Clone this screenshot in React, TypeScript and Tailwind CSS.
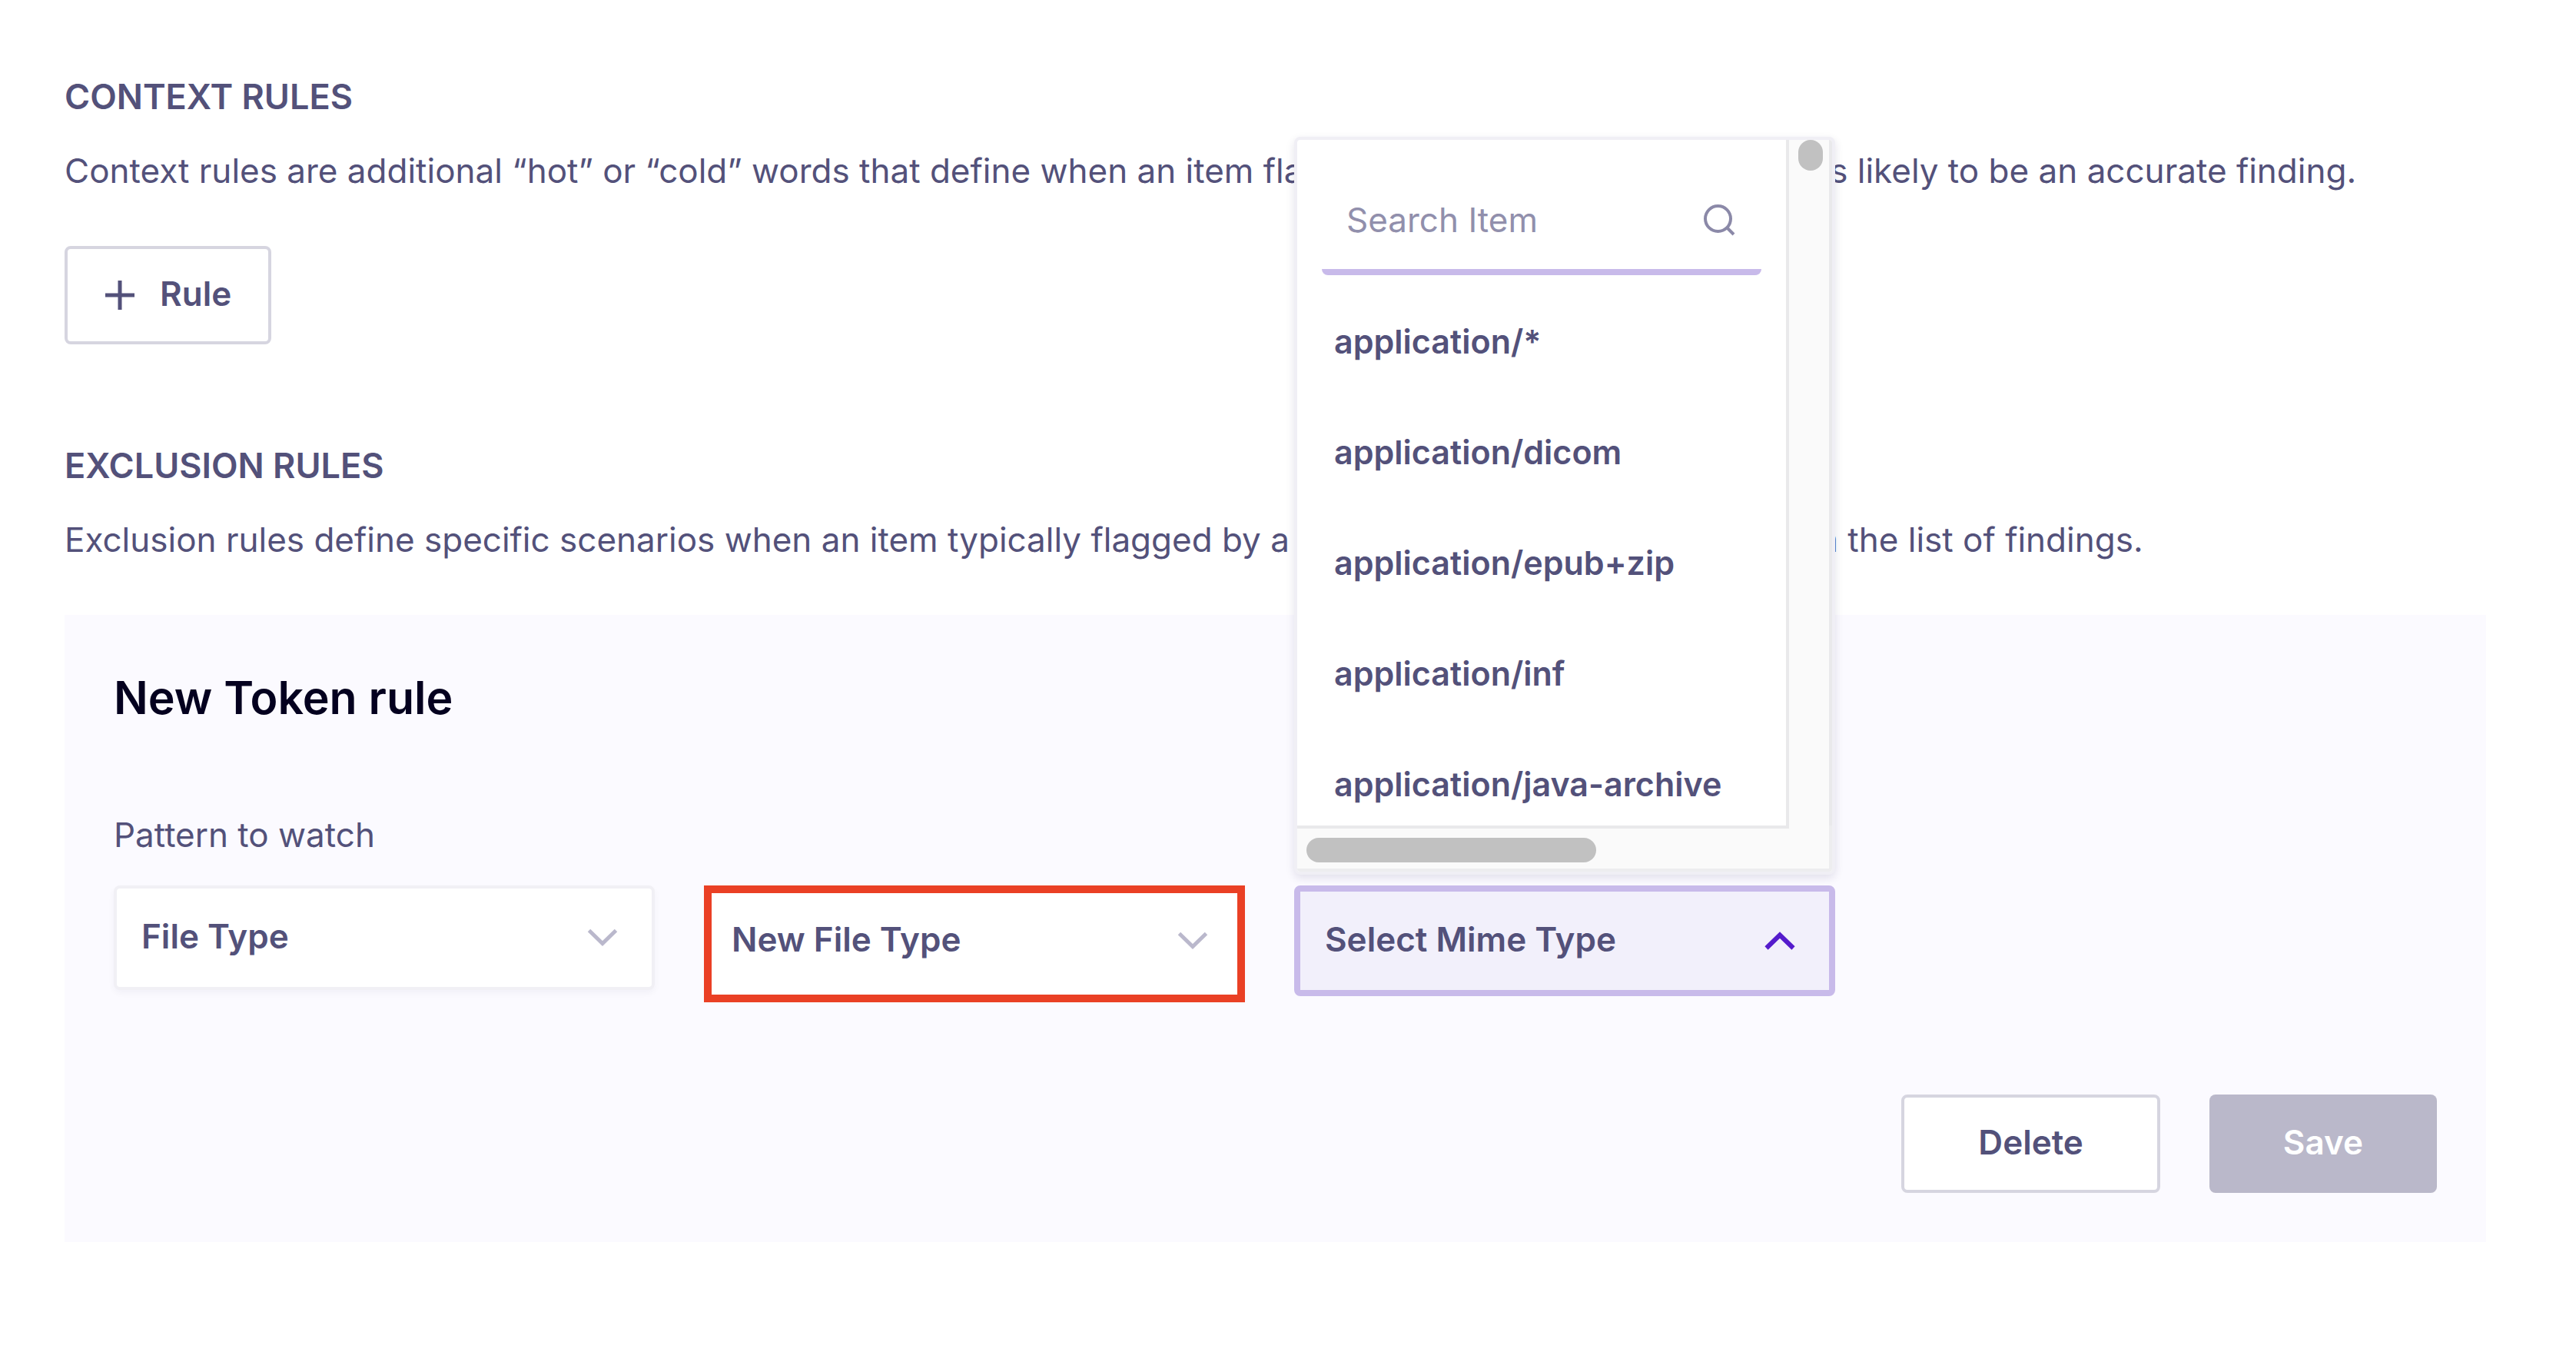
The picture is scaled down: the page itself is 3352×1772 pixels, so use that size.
import React from "react";

const mimeTypes = [
  "application/*",
  "application/dicom",
  "application/epub+zip",
  "application/inf",
  "application/java-archive",
];

function Chevron({ up = false, className = "" }: { up?: boolean; className?: string }) {
  return (
    <svg
      aria-hidden="true"
      viewBox="0 0 40 24"
      fill="none"
      stroke="currentColor"
      strokeWidth={up ? 6 : 5}
      className={`pointer-events-none h-6 w-10 ${className}`}
    >
      <path d={up ? "M2.5 21.5 20 4.5 37.5 21.5" : "M2.5 2.5 20 19.5 37.5 2.5"} />
    </svg>
  );
}

function RuleIntro({ title, children }: { title: string; children: React.ReactNode }) {
  return (
    <>
      <h2 className="text-[45px] leading-16 font-semibold">{title}</h2>
      <p className="mt-8 text-[44px] leading-16 whitespace-nowrap">{children}</p>
    </>
  );
}

function SearchBox() {
  return (
    <label className="mx-8 mt-8 flex h-36 shrink-0 items-center rounded-b-lg border-b-8 border-[#c8baea] pt-2 pr-[34px] pl-8 text-[#8b89a8]">
      <span className="sr-only">Search mime types</span>
      <input
        type="text"
        placeholder="Search Item"
        className="w-0 min-w-0 flex-1 bg-transparent text-[44px] leading-16 outline-none placeholder:text-[#918fac]"
      />
      <svg aria-hidden="true" viewBox="0 0 42 42" fill="none" stroke="currentColor" strokeWidth="4" className="size-[42px]">
        <circle cx="19.5" cy="19.5" r="16.5" />
        <path d="M31 31 40 40" />
      </svg>
    </label>
  );
}

function MimeTypeMenu() {
  return (
    <div className="absolute inset-x-0 bottom-full mb-[14px] flex h-[960px] flex-col overflow-hidden rounded-lg border-4 border-[#f0eff5] bg-white shadow-[0_4px_12px_rgba(30,25,80,0.12)]">
      <div className="flex min-h-0 flex-1">
        <div className="flex min-w-0 flex-1 flex-col overflow-hidden">
          <SearchBox />
          <ul role="listbox" aria-label="Mime types" className="mt-[14px]">
            {mimeTypes.map((type) => (
              <li
                key={type}
                role="option"
                aria-selected="false"
                className="flex h-36 items-center pl-12 text-[43px] font-semibold whitespace-nowrap"
              >
                {type}
              </li>
            ))}
          </ul>
        </div>
        <div className="w-15 border-x-4 border-[#e9e9eb] bg-[#fafafa] pl-3">
          <div className="h-10 w-8 rounded-full bg-[#c1c1c1]" />
        </div>
      </div>
      <div className="flex h-15 shrink-0 border-b-4 border-[#ededef] bg-[#fafafa]">
        <div className="flex-1 border-t-4 border-[#e9e9eb] pt-3 pl-3">
          <div className="h-8 w-3/5 rounded-full bg-[#c1c1c1]" />
        </div>
        <div className="w-14 border-r-4 border-[#ededef]" />
      </div>
    </div>
  );
}

export default function App() {
  return (
    <main className="min-h-screen bg-white pt-[94px] pr-[117px] pb-16 pl-[84px] font-['Inter',sans-serif] text-[44px] leading-16 text-[#53517a]">
      <section>
        <RuleIntro title="CONTEXT RULES">
          Context rules are additional “hot” or “cold” words that define when an item flagged by a detector is more or less
          likely to be an accurate finding.
        </RuleIntro>
        <button
          type="button"
          className="mt-[66px] flex h-32 items-center gap-8 rounded-lg border-4 border-[#d6d5e0] bg-white px-12 font-semibold"
        >
          <svg aria-hidden="true" viewBox="0 0 40 40" fill="none" stroke="currentColor" strokeWidth="5" className="size-10">
            <path d="M20 1v38M1 20h38" />
          </svg>
          <span className="pb-1">Rule</span>
        </button>
      </section>

      <section className="mt-[126px]">
        <RuleIntro title="EXCLUSION RULES">
          Exclusion rules define specific scenarios when an item typically flagged by a detector should be excluded from the
          list of findings.
        </RuleIntro>

        <form className="mt-[66px] bg-[#fbfaff] px-16 pt-[72px] pb-16" onSubmit={(e) => e.preventDefault()}>
          <h3 className="text-[59px] leading-[72px] font-semibold text-[#04001f]">New Token rule</h3>
          <label htmlFor="pattern" className="mt-[110px] block">
            Pattern to watch
          </label>
          <div className="mt-[34px] flex items-start gap-16">
            <div className="relative w-[704px]">
              <select
                id="pattern"
                className="block h-34 w-full appearance-none rounded-lg border-4 border-[#f1f0f5] bg-white pr-24 pb-1 pl-8 font-semibold shadow-[0_4px_8px_rgba(30,25,80,0.04)]"
              >
                <option>File Type</option>
              </select>
              <Chevron className="absolute top-1/2 right-12 -translate-y-1/2 text-[#bab8cc]" />
            </div>

            <div className="relative w-[704px]">
              <select
                aria-label="File type"
                className="block h-38 w-full appearance-none border-10 border-[#ea4025] bg-white pr-24 pb-3 pl-[26px] font-semibold"
              >
                <option>New File Type</option>
              </select>
              <Chevron className="absolute top-[60px] right-12 text-[#bab8cc]" />
            </div>

            <div className="relative w-[704px]">
              <button
                type="button"
                aria-haspopup="listbox"
                aria-expanded="true"
                className="flex h-36 w-full items-center justify-between rounded-lg border-8 border-[#c8baea] bg-[#f2f0fb] pr-11 pl-8 font-semibold"
              >
                <span className="pb-1">Select Mime Type</span>
                <Chevron up className="text-[#551bcc]" />
              </button>
              <MimeTypeMenu />
            </div>
          </div>

          <div className="mt-[120px] flex justify-end gap-16">
            <button type="button" className="h-32 rounded-lg border-4 border-[#d6d5e0] bg-white px-24 pb-1 font-semibold">
              Delete
            </button>
            <button type="submit" disabled className="h-32 rounded-lg bg-[#bab8ca] px-24 pb-1 font-semibold text-white">
              Save
            </button>
          </div>
        </form>
      </section>
    </main>
  );
}
